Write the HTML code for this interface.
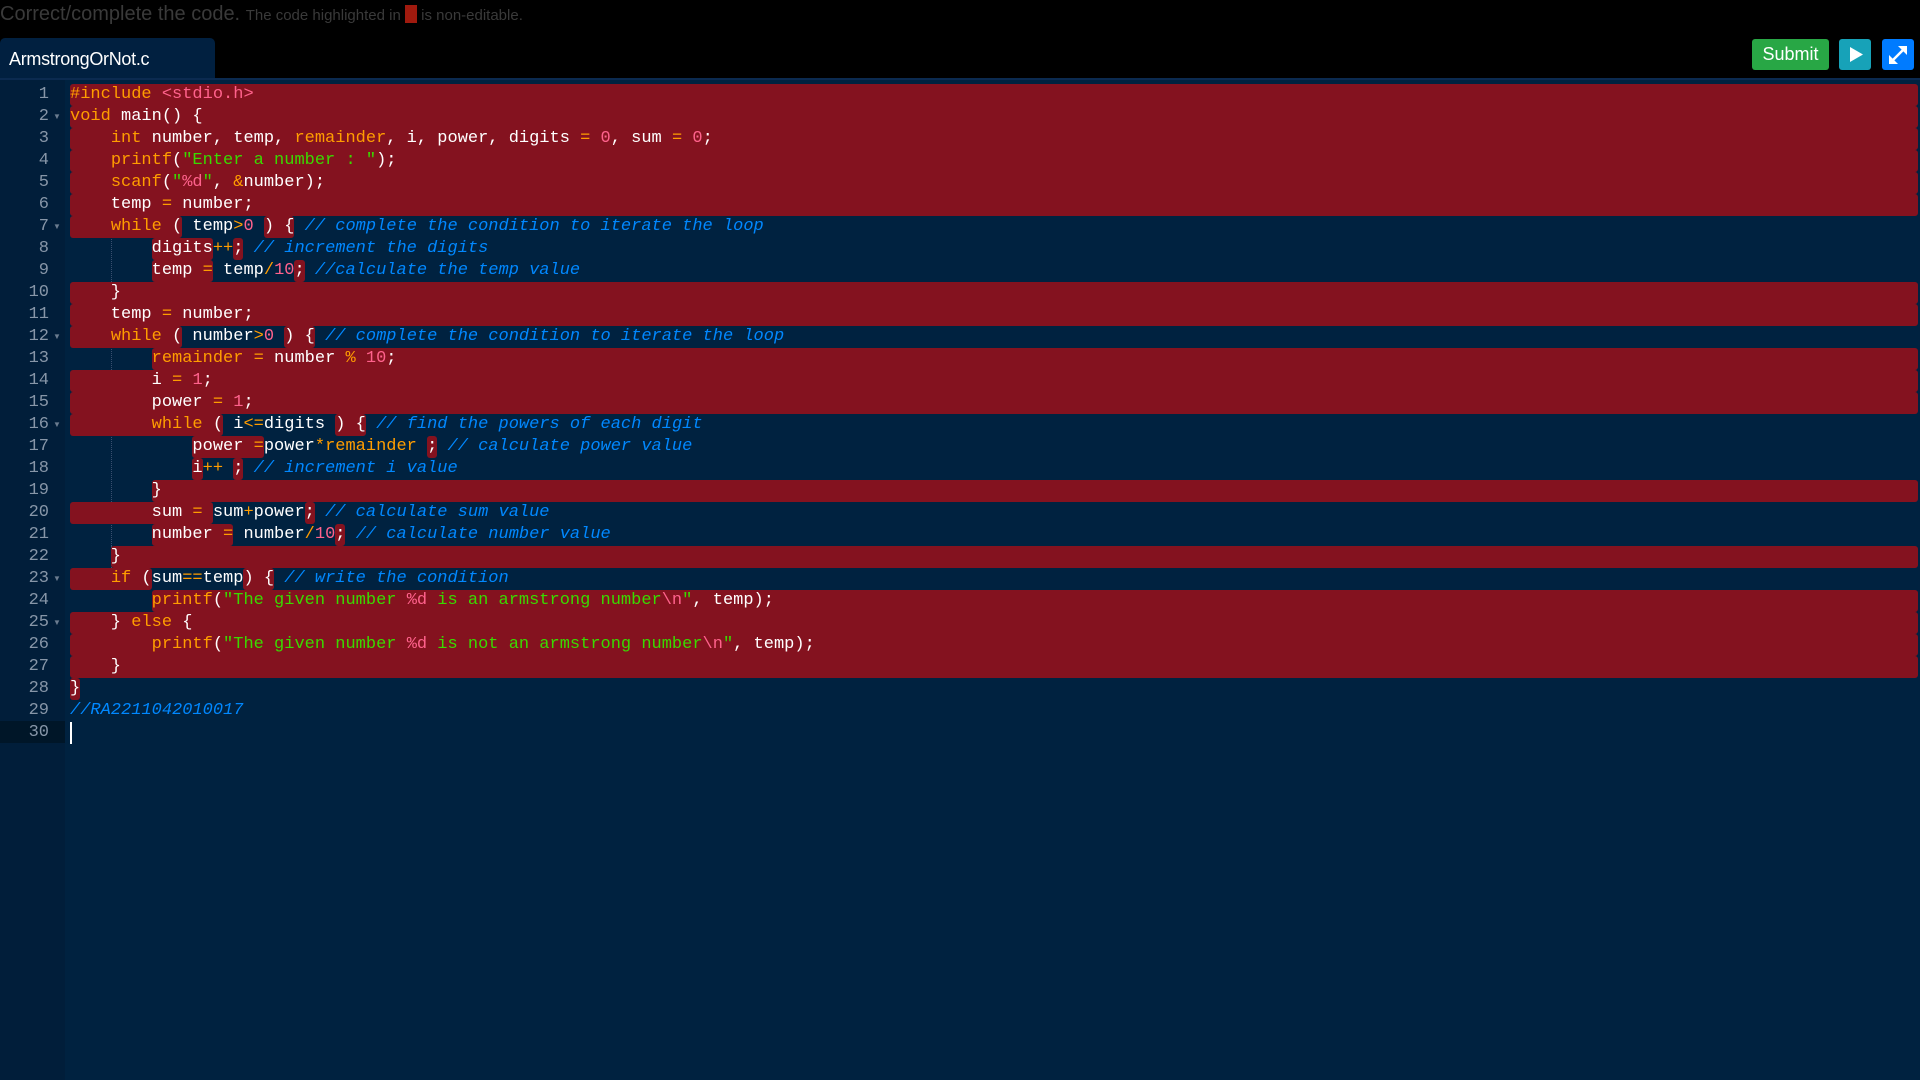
<!DOCTYPE html>
<html><head><meta charset="utf-8"><style>
html,body{margin:0;padding:0;width:1920px;height:1080px;background:#000;overflow:hidden;font-family:"Liberation Sans",sans-serif}
.hdr{position:absolute;left:0;top:3px;color:#3a3a3a;font-size:20px;white-space:nowrap}
.hdr small{font-size:15px}
.hdr b{display:inline-block;width:12px;height:18px;background:#a01a0e;vertical-align:-3px}
.tab{position:absolute;left:0;top:38px;width:215px;height:41px;background:#012040;border-radius:5px 5px 0 0;color:#fff;font-size:18px;line-height:42px;padding-left:9px;box-sizing:border-box;letter-spacing:-0.3px}
.btn{position:absolute;top:39px;height:31px;border-radius:3px}
.ed{position:absolute;left:0;top:78px;width:1920px;height:1002px;background:#002240;border-top:2px solid #0b2a50;box-sizing:border-box}
.gut{position:absolute;left:0;top:80px;width:65px;height:1000px;background:#011e3a}
.code{position:absolute;left:70px;top:0;width:1848px;font-family:"Liberation Mono",monospace;font-size:17px;color:#fff}
.L{position:absolute;left:0;height:22px;width:1848px;line-height:22px;white-space:pre}
.bg{position:absolute;top:0;bottom:0;right:0;background:#84121f;border-radius:3px}
.L>span.t{position:relative}
.r{background:#84121f;display:inline-block;height:22px;border-radius:3px}
.k{color:#ff9d00}.n{color:#ff628c}.s{color:#3ad900}.c{color:#0088ff;font-style:italic}
.num{position:absolute;left:0;width:49px;text-align:right;font-family:"Liberation Mono",monospace;font-size:17px;color:#8796a8;line-height:22px}
.fold{position:absolute;left:53px;color:#6b7c90;font-size:8px;line-height:22px}
.guide{position:absolute;width:0;border-left:1px dotted #3a5070}
</style></head><body>
<div class="hdr">Correct/complete the code. <small>The code highlighted in <b></b> is non-editable.</small></div>
<div class="tab">ArmstrongOrNot.c</div>
<div class="btn" style="left:1752px;width:77px;background:#28a745;color:#fff;font-size:18px;line-height:31px;text-align:center">Submit</div>
<div class="btn" style="left:1839px;width:32px;background:#17a2b8"><svg width="32" height="31"><polygon points="11,8 11,23 24,15.5" fill="#fff"/></svg></div>
<div class="btn" style="left:1882px;width:32px;background:#007bff"><svg width="32" height="31"><g stroke="#fff" stroke-width="2.5" fill="#fff"><line x1="10" y1="22" x2="22" y2="10"/></g><polygon points="16,7 25,7 25,16" fill="#fff"/><polygon points="7,16 7,25 16,25" fill="#fff"/></svg></div>
<div class="ed"></div>
<div class="gut"></div>
<div style="position:absolute;left:0;top:721px;width:65px;height:22px;background:#001628"></div>
<div style="position:absolute;left:0;top:84px;width:1920px;height:700px">
<div class="guide" style="left:111px;top:132px;height:132px"></div>
<div class="guide" style="left:111px;top:198px;height:264px"></div>
<div class="guide" style="left:152px;top:286px;height:44px"></div>
<div class="guide" style="left:111px;top:418px;height:22px"></div>
<div class="guide" style="left:111px;top:462px;height:22px"></div>
<div class="code">
<div class="L" style="top:0"><div class="bg" style="left:0"></div><span class="t"><span class="k">#include</span> <span class="n">&lt;stdio.h&gt;</span></span></div>
<div class="L" style="top:22px"><div class="bg" style="left:0"></div><span class="t"><span class="k">void</span> main() {</span></div>
<div class="L" style="top:44px"><div class="bg" style="left:0"></div><span class="t">    <span class="k">int</span> number, temp, <span class="k">remainder</span>, i, power, digits <span class="k">=</span> <span class="n">0</span>, sum <span class="k">=</span> <span class="n">0</span>;</span></div>
<div class="L" style="top:66px"><div class="bg" style="left:0"></div><span class="t">    <span class="k">printf</span>(<span class="s">"Enter a number : "</span>);</span></div>
<div class="L" style="top:88px"><div class="bg" style="left:0"></div><span class="t">    <span class="k">scanf</span>(<span class="s">"</span><span class="n">%d</span><span class="s">"</span>, <span class="k">&amp;</span>number);</span></div>
<div class="L" style="top:110px"><div class="bg" style="left:0"></div><span class="t">    temp <span class="k">=</span> number;</span></div>
<div class="L" style="top:132px"><span class="r">    <span class="k">while</span> (</span> temp<span class="k">&gt;</span><span class="n">0</span> <span class="r">) {</span> <span class="c">// complete the condition to iterate the loop</span></div>
<div class="L" style="top:154px">        <span class="r">digits</span><span class="k">++</span><span class="r">;</span> <span class="c">// increment the digits</span></div>
<div class="L" style="top:176px">        <span class="r">temp <span class="k">=</span></span> temp<span class="k">/</span><span class="n">10</span><span class="r">;</span> <span class="c">//calculate the temp value</span></div>
<div class="L" style="top:198px"><div class="bg" style="left:0"></div><span class="t">    }</span></div>
<div class="L" style="top:220px"><div class="bg" style="left:0"></div><span class="t">    temp <span class="k">=</span> number;</span></div>
<div class="L" style="top:242px"><span class="r">    <span class="k">while</span> (</span> number<span class="k">&gt;</span><span class="n">0</span> <span class="r">) {</span> <span class="c">// complete the condition to iterate the loop</span></div>
<div class="L" style="top:264px"><div class="bg" style="left:8ch"></div><span class="t">        <span class="k">remainder</span> <span class="k">=</span> number <span class="k">%</span> <span class="n">10</span>;</span></div>
<div class="L" style="top:286px"><div class="bg" style="left:0"></div><span class="t">        i <span class="k">=</span> <span class="n">1</span>;</span></div>
<div class="L" style="top:308px"><div class="bg" style="left:0"></div><span class="t">        power <span class="k">=</span> <span class="n">1</span>;</span></div>
<div class="L" style="top:330px"><span class="r">        <span class="k">while</span> (</span> i<span class="k">&lt;=</span>digits <span class="r">) {</span> <span class="c">// find the powers of each digit</span></div>
<div class="L" style="top:352px">            <span class="r">power <span class="k">=</span></span>power<span class="k">*</span><span class="k">remainder</span> <span class="r">;</span> <span class="c">// calculate power value</span></div>
<div class="L" style="top:374px">            <span class="r">i</span><span class="k">++</span> <span class="r">;</span> <span class="c">// increment i value</span></div>
<div class="L" style="top:396px"><div class="bg" style="left:8ch"></div><span class="t">        }</span></div>
<div class="L" style="top:418px"><span class="r">        sum <span class="k">=</span> </span>sum<span class="k">+</span>power<span class="r">;</span> <span class="c">// calculate sum value</span></div>
<div class="L" style="top:440px">        <span class="r">number <span class="k">=</span></span> number<span class="k">/</span><span class="n">10</span><span class="r">;</span> <span class="c">// calculate number value</span></div>
<div class="L" style="top:462px"><div class="bg" style="left:4ch"></div><span class="t">    }</span></div>
<div class="L" style="top:484px"><span class="r">    <span class="k">if</span> (</span>sum<span class="k">==</span>temp<span class="r">) {</span> <span class="c">// write the condition</span></div>
<div class="L" style="top:506px"><div class="bg" style="left:8ch"></div><span class="t">        <span class="k">printf</span>(<span class="s">"The given number </span><span class="n">%d</span><span class="s"> is an armstrong number</span><span class="n">\n</span><span class="s">"</span>, temp);</span></div>
<div class="L" style="top:528px"><div class="bg" style="left:0"></div><span class="t">    } <span class="k">else</span> {</span></div>
<div class="L" style="top:550px"><div class="bg" style="left:0"></div><span class="t">        <span class="k">printf</span>(<span class="s">"The given number </span><span class="n">%d</span><span class="s"> is not an armstrong number</span><span class="n">\n</span><span class="s">"</span>, temp);</span></div>
<div class="L" style="top:572px"><div class="bg" style="left:0"></div><span class="t">    }</span></div>
<div class="L" style="top:594px"><span class="r">}</span></div>
<div class="L" style="top:616px"><span class="c">//RA2211042010017</span></div>
<div class="L" style="top:638px"><span style="display:inline-block;width:2px;height:22px;background:#fff;vertical-align:top"></span></div>
</div>
<div class="num" style="top:0">1</div><div class="num" style="top:22px">2</div><div class="num" style="top:44px">3</div><div class="num" style="top:66px">4</div><div class="num" style="top:88px">5</div><div class="num" style="top:110px">6</div><div class="num" style="top:132px">7</div><div class="num" style="top:154px">8</div><div class="num" style="top:176px">9</div><div class="num" style="top:198px">10</div><div class="num" style="top:220px">11</div><div class="num" style="top:242px">12</div><div class="num" style="top:264px">13</div><div class="num" style="top:286px">14</div><div class="num" style="top:308px">15</div><div class="num" style="top:330px">16</div><div class="num" style="top:352px">17</div><div class="num" style="top:374px">18</div><div class="num" style="top:396px">19</div><div class="num" style="top:418px">20</div><div class="num" style="top:440px">21</div><div class="num" style="top:462px">22</div><div class="num" style="top:484px">23</div><div class="num" style="top:506px">24</div><div class="num" style="top:528px">25</div><div class="num" style="top:550px">26</div><div class="num" style="top:572px">27</div><div class="num" style="top:594px">28</div><div class="num" style="top:616px">29</div><div class="num" style="top:638px">30</div>
<div class="fold" style="top:22px">▼</div><div class="fold" style="top:132px">▼</div><div class="fold" style="top:242px">▼</div><div class="fold" style="top:330px">▼</div><div class="fold" style="top:484px">▼</div><div class="fold" style="top:528px">▼</div>
</div>
</body></html>
